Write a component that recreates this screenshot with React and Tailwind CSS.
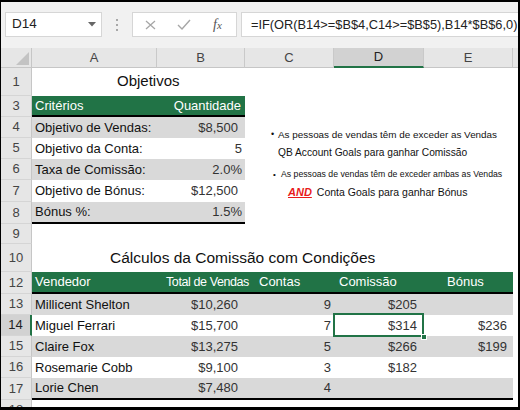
import React from 'react';

function RowHead({ n, active }) {
  return (
    <div
      className={`w-[31px] shrink-0 h-full flex items-center justify-center text-[13px] border-b border-b-[#d5d5d5] ${
        active
          ? 'bg-[#d2d2d2] text-[#222] border-r-2 border-r-[#217346]'
          : 'bg-[#e6e6e6] text-[#444] border-r border-r-[#c6c6c6]'
      }`}
    >
      {n}
    </div>
  );
}

function ColHead({ label, w, active }) {
  return (
    <div
      className={`${w} shrink-0 h-full flex items-center justify-center text-[13px] border-r border-r-[#c9c9c9] ${
        active
          ? 'bg-[#d2d2d2] text-[#222] border-b-2 border-b-[#217346]'
          : 'bg-[#e6e6e6] text-[#444] border-b border-b-[#c6c6c6]'
      }`}
    >
      {label}
    </div>
  );
}

const goals = [
  { n: 4, label: 'Objetivo de Vendas:', value: '$8,500', gray: true, pr: 'pr-[7px]', h: 'h-[21px]' },
  { n: 5, label: 'Objetivo da Conta:', value: '5', gray: false, pr: 'pr-[3px]', h: 'h-[21px]' },
  { n: 6, label: 'Taxa de Comissão:', value: '2.0%', gray: true, pr: 'pr-[3px]', h: 'h-[21px]' },
  { n: 7, label: 'Objetivo de Bónus:', value: '$12,500', gray: false, pr: 'pr-[7px]', h: 'h-[22px]' },
  { n: 8, label: 'Bónus %:', value: '1.5%', gray: true, pr: 'pr-[3px]', h: 'h-[22px]', last: true },
];

const sales = [
  { n: 13, name: 'Millicent Shelton', total: '$10,260', contas: '9', com: '$205', bonus: '', gray: true, h: 'h-[21px]' },
  { n: 14, name: 'Miguel Ferrari', total: '$15,700', contas: '7', com: '$314', bonus: '$236', gray: false, h: 'h-[21px]', active: true },
  { n: 15, name: 'Claire Fox', total: '$13,275', contas: '5', com: '$266', bonus: '$199', gray: true, h: 'h-[21px]' },
  { n: 16, name: 'Rosemarie Cobb', total: '$9,100', contas: '3', com: '$182', bonus: '', gray: false, h: 'h-[21px]' },
  { n: 17, name: 'Lorie Chen', total: '$7,480', contas: '4', com: '', bonus: '', gray: true, h: 'h-[22px]', last: true },
];

export default function App() {
  return (
    <div className="relative w-[520px] h-[410px] overflow-hidden bg-white border-t-2 border-l border-r-2 border-b-[3px] border-black flex flex-col font-['Liberation_Sans',Arial,sans-serif] text-[#111]">
      {/* formula bar */}
      <div className="h-[46px] shrink-0 bg-[#f1f1f1] flex items-start pt-[10px]">
        <div className="ml-[4px] w-[97px] h-[25px] bg-white border border-[#d6d6d6] flex items-center justify-between pl-[6px] pr-[5px]">
          <span className="text-[13.5px] text-[#222]">D14</span>
          <svg width="8" height="5" viewBox="0 0 8 5">
            <polygon points="0,0 8,0 4,4.5" fill="#666" />
          </svg>
        </div>
        <div className="w-[30px] h-[25px] flex flex-col items-center justify-center gap-[3px]">
          <span className="w-[2px] h-[2px] bg-[#a8a8a8]" />
          <span className="w-[2px] h-[2px] bg-[#a8a8a8]" />
          <span className="w-[2px] h-[2px] bg-[#a8a8a8]" />
        </div>
        <div className="w-[105px] h-[25px] bg-white border border-[#d6d6d6] flex items-center">
          <svg className="ml-[12px]" width="11" height="10" viewBox="0 0 11 10">
            <path d="M1 1 L10 9 M10 1 L1 9" stroke="#a6a6a6" strokeWidth="1.3" fill="none" />
          </svg>
          <svg className="ml-[21px]" width="14" height="11" viewBox="0 0 14 11">
            <path d="M1 6 L5 10 L13 1" stroke="#a6a6a6" strokeWidth="1.4" fill="none" />
          </svg>
          <span className="ml-[22px] font-['Liberation_Serif',serif] italic text-[14px] text-[#555] leading-none">
            f<span className="text-[11px]">x</span>
          </span>
        </div>
        <div className="ml-[4px] flex-1 h-[25px] bg-white border border-[#d6d6d6] border-r-0 flex items-center pl-[9px] overflow-hidden">
          <span className="text-[12.8px] text-[#222] whitespace-nowrap">=IF(OR(B14&gt;=$B$4,C14&gt;=$B$5),B14*$B$6,0)</span>
        </div>
      </div>

      {/* column headers */}
      <div className="h-[20px] shrink-0 flex">
        <div className="w-[31px] shrink-0 h-full bg-[#e6e6e6] border-r border-r-[#c6c6c6] border-b border-b-[#c6c6c6] flex items-end justify-end pr-[2px] pb-[2px]">
          <svg width="13" height="13" viewBox="0 0 13 13">
            <polygon points="13,0 13,13 0,13" fill="#c3c3c3" />
          </svg>
        </div>
        <ColHead label="A" w="w-[125px]" />
        <ColHead label="B" w="w-[88px]" />
        <ColHead label="C" w="w-[89px]" />
        <ColHead label="D" w="w-[90px]" active />
        <ColHead label="E" w="w-[89px]" />
        <div className="flex-1 h-full bg-[#e6e6e6] border-b border-b-[#c6c6c6]" />
      </div>

      {/* row 1 */}
      <div className="h-[28px] shrink-0 flex">
        <RowHead n="1" />
        <div className="flex items-end pb-[4px] pl-[85px] text-[15px] whitespace-nowrap">Objetivos</div>
      </div>

      {/* row 3 */}
      <div className="h-[21px] shrink-0 flex">
        <RowHead n="3" />
        <div className="w-[213px] bg-[#217346] border-b-2 border-black flex items-center justify-between pl-[3px] pr-[4px] text-[13px] text-white">
          <span>Critérios</span>
          <span>Quantidade</span>
        </div>
      </div>

      {goals.map((g) => (
        <div key={g.n} className={`${g.h} shrink-0 flex`}>
          <RowHead n={g.n} />
          <div
            className={`w-[213px] flex items-center justify-between pl-[3px] ${g.pr} text-[13px] ${
              g.gray ? 'bg-[#d9d9d9]' : 'bg-white'
            } ${g.last ? 'border-b-2 border-black' : ''}`}
          >
            <span>{g.label}</span>
            <span className="text-[#333]">{g.value}</span>
          </div>
        </div>
      ))}

      {/* row 9 */}
      <div className="h-[20px] shrink-0 flex">
        <RowHead n="9" />
      </div>

      {/* row 10 */}
      <div className="h-[28px] shrink-0 flex">
        <RowHead n="10" />
        <div className="flex items-end pb-[3px] pl-[78px] text-[15.5px] whitespace-nowrap">
          Cálculos da Comissão com Condições
        </div>
      </div>

      {/* row 12 */}
      <div className="h-[22px] shrink-0 flex">
        <RowHead n="12" />
        <div className="w-[481px] flex bg-[#217346] border-b-2 border-black text-[13px] text-white">
          <div className="w-[125px] shrink-0 flex items-center pl-[3px]">Vendedor</div>
          <div className="w-[88px] shrink-0 flex items-center pl-[9px] whitespace-nowrap text-[12.5px] tracking-[-0.4px]">Total de Vendas</div>
          <div className="w-[89px] shrink-0 flex items-center pl-[14px]">Contas</div>
          <div className="w-[90px] shrink-0 flex items-center pl-[5px]">Comissão</div>
          <div className="w-[89px] shrink-0 flex items-center pl-[23px]">Bónus</div>
        </div>
      </div>

      {sales.map((s) => (
        <div key={s.n} className={`${s.h} shrink-0 flex`}>
          <RowHead n={s.n} active={s.active} />
          <div
            className={`w-[481px] flex text-[13px] ${s.gray ? 'bg-[#d9d9d9]' : 'bg-white'} ${
              s.last ? 'border-b-2 border-black' : ''
            }`}
          >
            <div className="w-[125px] shrink-0 flex items-center pl-[3px]">{s.name}</div>
            <div className="w-[88px] shrink-0 flex items-center justify-end pr-[7px] text-[#333]">{s.total}</div>
            <div className="w-[89px] shrink-0 flex items-center justify-end pr-[3px] text-[#333]">{s.contas}</div>
            <div className="relative w-[90px] shrink-0 flex items-center justify-end pr-[7px] text-[#333]">
              {s.com}
              {s.active && (
                <>
                  <div className="absolute -top-[2px] -bottom-[1px] -left-[1px] right-0 border-2 border-[#217346]" />
                  <div className="absolute -right-[3px] -bottom-[4px] w-[6px] h-[6px] bg-[#217346] border border-white" />
                </>
              )}
            </div>
            <div className="w-[89px] shrink-0 flex items-center justify-end pr-[6px] text-[#333]">{s.bonus}</div>
          </div>
        </div>
      ))}

      {/* row 18 */}
      <div className="h-[21px] shrink-0 flex">
        <RowHead n="18" />
      </div>

      {/* floating notes text box */}
      <div className="absolute left-[269px] top-[124px] text-[#111] whitespace-nowrap">
        <div className="h-[18px] flex items-center">
          <span className="w-[8px] pl-[1px] text-[9px]">•</span>
          <span className="text-[9.9px]">As pessoas de vendas têm de exceder as Vendas</span>
        </div>
        <div className="h-[17px] flex items-center pl-[8px] text-[10.2px]">QB Account Goals para ganhar Comissão</div>
        <div className="h-[5px]" />
        <div className="h-[18px] flex items-center pl-[3px]">
          <span className="w-[8px] text-[8px]">•</span>
          <span className="text-[8.7px]">As pessoas de vendas têm de exceder ambas as Vendas</span>
        </div>
        <div className="h-[17px] flex items-center pl-[18px] gap-[5px]">
          <span className="text-[11px] font-bold italic underline text-[#e81a1a]">AND</span>
          <span className="text-[10.5px]">Conta Goals para ganhar Bónus</span>
        </div>
      </div>
    </div>
  );
}
